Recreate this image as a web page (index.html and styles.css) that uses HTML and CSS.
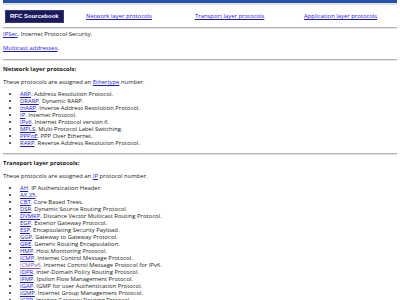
FILE: index.html
```html
<!DOCTYPE html>
<html lang="en">
<head>
    <meta charset="UTF-8">
    <title>RFC Sourcebook - Protocols</title>
    <link rel="stylesheet" href="styles.css">
</head>
<body>
    <div class="topbar"></div>

    <nav class="nav">
        <span class="brand">RFC Sourcebook</span>
        <a href="#network">Network layer protocols</a>
        <a href="#transport">Transport layer protocols</a>
        <a href="#application">Application layer protocols</a>
    </nav>

    <hr>

    <section class="intro">
        <p><a href="#">IPSec</a>. Internet Protocol Security.</p>
        <p><a href="#">Multicast addresses</a>.</p>
    </section>

    <hr>

    <section id="network" class="group">
        <h2>Network layer protocols:</h2>
        <p>These protocols are assigned an <a href="#">Ethertype</a> number.</p>
        <ul>
            <li><a href="#">ARP</a>. Address Resolution Protocol.</li>
            <li><a href="#">DRARP</a>. Dynamic RARP.</li>
            <li><a href="#">InARP</a>. Inverse Address Resolution Protocol.</li>
            <li><a href="#">IP</a>. Internet Protocol.</li>
            <li><a href="#">IPv6</a>. Internet Protocol version 6.</li>
            <li><a href="#">MPLS</a>. Multi-Protocol Label Switching.</li>
            <li><a href="#">PPPoE</a>. PPP Over Ethernet.</li>
            <li><a href="#">RARP</a>. Reverse Address Resolution Protocol.</li>
        </ul>
    </section>

    <hr>

    <section id="transport" class="group">
        <h2>Transport layer protocols:</h2>
        <p>These protocols are assigned an <a href="#">IP</a> protocol number.</p>
        <ul>
            <li><a href="#">AH</a>. IP Authentication Header.</li>
            <li><a href="#">AX.25</a>.</li>
            <li><a href="#">CBT</a>. Core Based Trees.</li>
            <li><a href="#">DSR</a>. Dynamic Source Routing Protocol.</li>
            <li><a href="#">DVMRP</a>. Distance Vector Multicast Routing Protocol.</li>
            <li><a href="#">EGP</a>. Exterior Gateway Protocol.</li>
            <li><a href="#">ESP</a>. Encapsulating Security Payload.</li>
            <li><a href="#">GGP</a>. Gateway to Gateway Protocol.</li>
            <li><a href="#">GRE</a>. Generic Routing Encapsulation.</li>
            <li><a href="#">HMP</a>. Host Monitoring Protocol.</li>
            <li><a href="#">ICMP</a>. Internet Control Message Protocol.</li>
            <li><a href="#" class="visited">ICMPv6</a>. Internet Control Message Protocol for IPv6.</li>
            <li><a href="#">IDPR</a>. Inter-Domain Policy Routing Protocol.</li>
            <li><a href="#">IFMP</a>. Ipsilon Flow Management Protocol.</li>
            <li><a href="#">IGAP</a>. IGMP for user Authentication Protocol.</li>
            <li><a href="#">IGMP</a>. Internet Group Management Protocol.</li>
            <li><a href="#">IGRP</a>. Interior Gateway Routing Protocol.</li>
        </ul>
    </section>
</body>
</html>
```

FILE: styles.css
```css
body {
    margin: 0 3px;
    font-family: "Open Sans", sans-serif;
    font-size: 5.9px;
    line-height: 7px;
    color: #222;
    background: #fff;
}
a {
    color: #1a1acc;
}
a.visited {
    color: #7a52b8;
}
.topbar {
    height: 3px;
    margin: 0 0 0 -3px;
    background: #2452a8;
    border-bottom: 2px solid #e2e2e2;
}
.nav {
    display: grid;
    grid-template-columns: 81px 109px 109px 1fr;
    align-items: center;
    padding: 5px 0 4px 2px;
}
.nav .brand {
    justify-self: start;
    padding: 2px 4px;
    background: #1b1b5e;
    border: 1px solid #3a3a7a;
    color: #fff;
    font-family: "Liberation Sans", Arial, sans-serif;
    font-weight: bold;
    font-size: 6px;
}
hr {
    margin: 0;
    height: 0;
    border: 0;
    border-top: 1px solid #b4b4b4;
    border-bottom: 1px solid #e4e4e4;
}
.intro {
    padding: 2px 0 7px;
}
.intro p {
    margin: 0 0 7px;
}
.intro p:last-child {
    margin: 0;
}
.group {
    padding: 5px 0 6px;
}
.group h2 {
    margin: 0 0 6px;
    font-size: 5.9px;
    font-weight: bold;
}
.group p {
    margin: 0 0 5px;
}
.group ul {
    margin: 0;
    padding-left: 17px;
}
```
